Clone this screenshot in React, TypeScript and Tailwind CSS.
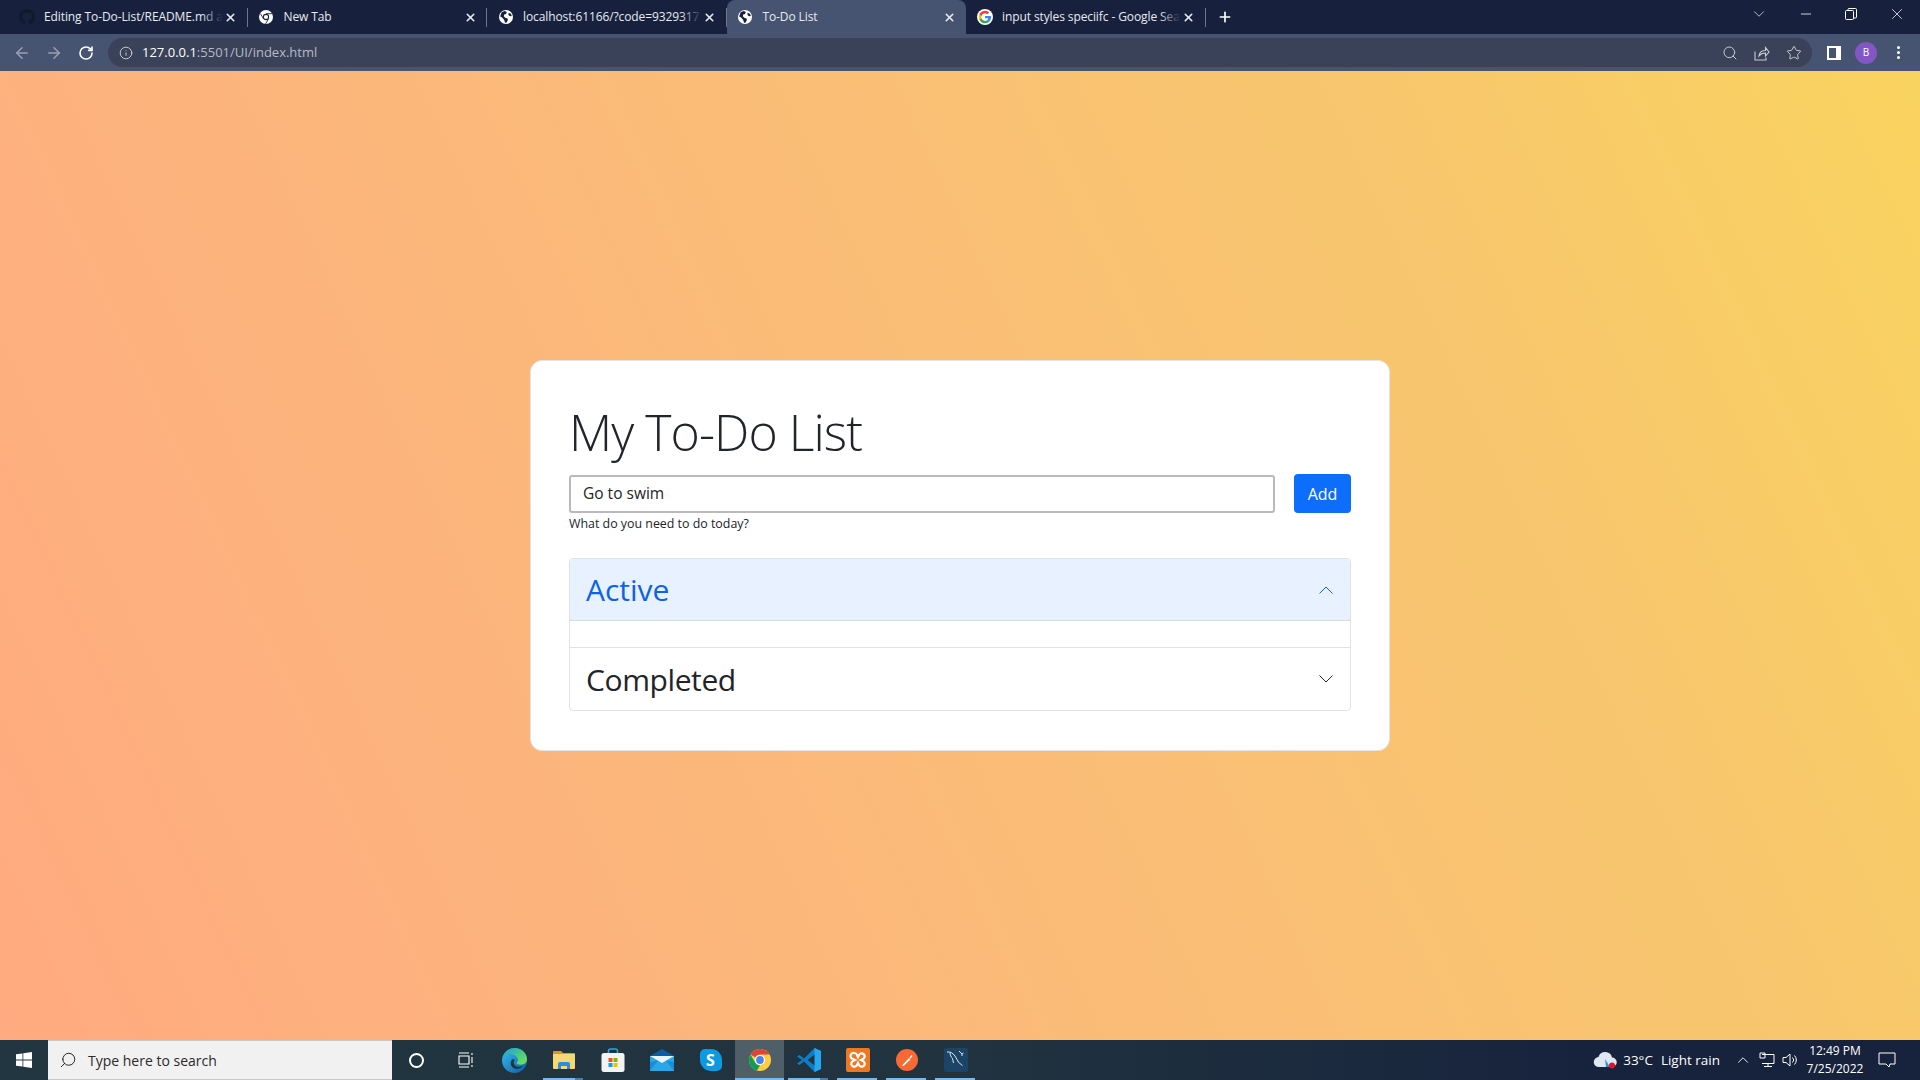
import React from "react";
import { ArrowLeft, ArrowRight, RotateCw, Info, Search, Star, X, ChevronDown, ChevronUp, Minus, Plus } from "lucide-react";

const Globe = () => (
  <svg width="14" height="14" viewBox="0 0 16 16" className="shrink-0">
    <circle cx="8" cy="8" r="8" fill="#fff" />
    <path d="M3 2.500 6.500 1 9 2.200 8 4.500 6 5l-.500 2L7.500 9l2 .300.700 2-1.700 3.200H7L5.800 11 3.500 8.500 1.300 7.300ZM11 3.200l2.700 1 .900 2.600-2 .400-1.800-1.600Z" fill="#18223e" />
  </svg>
);
const ChromeMono = () => (
  <svg width="14" height="14" viewBox="0 0 16 16" className="shrink-0">
    <circle cx="8" cy="8" r="8" fill="#fff" />
    <circle cx="8" cy="8" r="3.600" fill="#18223e" />
    <circle cx="8" cy="8" r="2.400" fill="#fff" />
    <path d="M8 4.200h7M5 10 1.600 4M11 10l-3.600 6" stroke="#18223e" strokeWidth="1" />
  </svg>
);
const GoogleG = () => (
  <svg width="16" height="16" viewBox="0 0 48 48" className="shrink-0">
    <circle cx="24" cy="24" r="24" fill="#fff" />
    <path fill="#4285F4" d="M42 24.500c0-1.300-.100-2.500-.300-3.600H24v7h10.100c-.400 2.300-1.800 4.300-3.700 5.600v4.600h6C40 34.800 42 30.100 42 24.500z" />
    <path fill="#34A853" d="M24 43c5 0 9.200-1.700 12.400-4.500l-6-4.600c-1.700 1.100-3.800 1.800-6.400 1.800-4.900 0-9-3.300-10.500-7.700H7.300v4.800C10.400 38.500 16.700 43 24 43z" />
    <path fill="#FBBC05" d="M13.500 28c-.400-1.100-.600-2.400-.600-3.600s.200-2.500.600-3.600V16H7.300C6.100 18.500 5.400 21.200 5.400 24.400s.700 5.900 1.900 8.400z" />
    <path fill="#EA4335" d="M24 13c2.800 0 5.200 1 7.200 2.800l5.300-5.300C33.200 7.400 29 5.600 24 5.600 16.700 5.600 10.400 10 7.300 16l6.200 4.800C15 16.300 19.100 13 24 13z" />
  </svg>
);
const Github = () => (
  <svg width="16" height="16" viewBox="0 0 16 16" className="shrink-0" fill="#111a2c">
    <path d="M8 0C3.580 0 0 3.580 0 8c0 3.540 2.290 6.530 5.470 7.590.4.070.55-.17.55-.38 0-.19-.01-.82-.01-1.490-2.010.37-2.530-.49-2.690-.94-.09-.23-.48-.94-.82-1.130-.28-.15-.68-.52-.01-.53.63-.01 1.080.58 1.230.82.720 1.210 1.870.870 2.330.660.070-.520.280-.870.510-1.070-1.780-.200-3.640-.890-3.640-3.950 0-.870.310-1.590.820-2.150-.080-.200-.360-1.020.080-2.120 0 0 .670-.210 2.200.820.640-.180 1.320-.270 2-.270s1.360.090 2 .270c1.530-1.040 2.200-.820 2.200-.820.440 1.100.160 1.920.080 2.120.510.560.820 1.270.820 2.150 0 3.070-1.870 3.750-3.650 3.950.290.250.540.730.540 1.480 0 1.070-.010 1.930-.010 2.200 0 .210.150.460.550.380A8.010 8.010 0 0 0 16 8c0-4.420-3.580-8-8-8z" />
  </svg>
);

function Tab({ icon, title, active, last }: { icon: React.ReactNode; title: string; active?: boolean; last?: boolean }) {
  return (
    <div className={`relative flex h-[34px] w-[239.5px] shrink-0 items-center pl-[11px] pr-[9px] ${active ? "rounded-t-lg bg-[#465371]" : ""}`}>
      <div className="flex w-[16px] items-center justify-center">{icon}</div>
      <div className="relative ml-[9px] w-[179px] overflow-hidden whitespace-nowrap text-[12px] tracking-[-0.1px] text-[#e8eaee]">
        {title}
        {!active && title.length > 20 && (
          <div className="absolute right-0 top-0 h-full w-[22px] bg-gradient-to-r from-transparent to-[#17213d]" />
        )}
      </div>
      <div className="ml-auto flex w-[16px] items-center justify-center">
        <X size={13} strokeWidth={3} color="#e8eaee" />
      </div>
      {!active && !last && <div className="absolute right-0 top-[8px] h-[19px] w-px bg-[#6f7787]" />}
      {last && <div className="absolute right-0 top-[8px] h-[19px] w-px bg-[#6f7787]" />}
    </div>
  );
}

const Taskslot = ({ children, underline, active, split }: { children: React.ReactNode; underline?: boolean; active?: boolean; split?: boolean }) => (
  <div className={`relative flex h-[40px] w-[49px] shrink-0 items-center justify-center ${active ? "bg-[#4f5f68]" : ""}`}>
    {children}
    {underline && (
      <div className={`absolute bottom-0 h-[2px] bg-[#76b9ed] ${active ? "left-0 right-0" : "left-[4px] right-[5px]"}`}>
        {split && <div className="absolute right-0 top-0 h-full w-[8px] bg-[#4a7ea6]" />}
      </div>
    )}
  </div>
);

const Edge = () => (
  <svg width="25" height="25" viewBox="0 0 24 24">
    <defs>
      <linearGradient id="e1" x1="0" y1="0" x2="1" y2="1"><stop offset="0" stopColor="#35c1f1" /><stop offset="1" stopColor="#0c59a4" /></linearGradient>
      <linearGradient id="e2" x1="0" y1="0" x2="1" y2="1"><stop offset="0" stopColor="#1b9de2" /><stop offset=".6" stopColor="#4fce7c" /><stop offset="1" stopColor="#7ce05a" /></linearGradient>
    </defs>
    <circle cx="12" cy="12" r="12" fill="url(#e1)" />
    <path d="M1 9C3 3 8 0 12 0c6 0 12 4 12 11 0 3-3 5-6 5s-4-1-4-2c1-1 2-2 1-4C13 6 8 5 5 6.500 3 7.500 2 8 1 9Z" fill="url(#e2)" />
    <path d="M9 12c-2 4 1 8 5 8 3 0 5-1 6-3-3 2-7 1-8-1-1-1-1-3 0-4 .500-1-2-2-3 0Z" fill="#1f3440" />
  </svg>
);
const Folder = () => (
  <svg width="22" height="20" viewBox="0 0 22 20">
    <path d="M0 2a1 1 0 0 1 1-1h7l2 2h11a1 1 0 0 1 1 1v2H0Z" fill="#d89b13" />
    <path d="M0 4h21a1 1 0 0 1 1 1v13a1 1 0 0 1-1 1H1a1 1 0 0 1-1-1Z" fill="#f7d774" />
    <path d="M5 19v-5a2 2 0 0 1 2-2h8a2 2 0 0 1 2 2v5h-3v-3H8v3Z" fill="#2d8ed4" />
  </svg>
);
const Store = () => (
  <svg width="24" height="24" viewBox="0 0 24 24">
    <path d="M7.500 7V3a2 2 0 0 1 2-2h5a2 2 0 0 1 2 2v4" fill="none" stroke="#27a5e8" strokeWidth="1.600" />
    <rect x="0.500" y="5" width="23" height="19" rx="2.500" fill="#f3f3f3" />
    <rect x="7.500" y="10" width="4" height="4" fill="#f25022" />
    <rect x="12.500" y="10" width="4" height="4" fill="#7fba00" />
    <rect x="7.500" y="15" width="4" height="4" fill="#00a4ef" />
    <rect x="12.500" y="15" width="4" height="4" fill="#ffb900" />
  </svg>
);
const Mail = () => (
  <svg width="24" height="22" viewBox="0 0 24 22">
    <path d="M0 7 12 0l12 7v3H0Z" fill="#0a5ea8" />
    <rect x="0" y="7" width="24" height="15" fill="#28a8ea" />
    <path d="M0 7h24L12 14Z" fill="#eaf4fb" />
    <path d="M0 22V13l8-1.500Zm24 0V13l-8-1.500Z" fill="#0f7dc9" opacity=".6" />
  </svg>
);
const Skype = () => (
  <div className="flex h-[22px] w-[22px] items-center justify-center rounded-l-[11px] rounded-r-[11px] rounded-tl-[5px] rounded-br-[5px] bg-[#0d9ae0] text-[16px] font-bold leading-none text-white">S</div>
);
const ChromeC = () => (
  <svg width="22" height="22" viewBox="0 0 48 48">
    <circle cx="24" cy="24" r="24" fill="#ffcd40" />
    <path d="M24 0a24 24 0 0 1 20.800 12H24a12 12 0 0 0-10.400 6L3.200 12A24 24 0 0 1 24 0Z" fill="#db4437" />
    <path d="M3.200 12 13.600 30A12 12 0 0 0 24 36l-6.600 11.100A24 24 0 0 1 3.200 12Z" fill="#0f9d58" />
    <circle cx="24" cy="24" r="11" fill="#fff" />
    <circle cx="24" cy="24" r="8.500" fill="#4285f4" />
  </svg>
);
const VSCode = () => (
  <svg width="24" height="24" viewBox="0 0 24 24">
    <path d="M17.500 0 24 3v18l-6.500 3L7 13.500 2.500 17 0 15.500 5 12 0 8.500 2.500 7 7 10.500Z" fill="#0f7cc5" />
    <path d="M17.500 0 24 3v18l-6.500 3Zm0 6.500L10.500 12l7 5.500Z" fill="#25a8f1" />
    <path d="M17.500 6.500 10.500 12l7 5.500Z" fill="#1f3440" />
  </svg>
);
const Xampp = () => (
  <svg width="24" height="24" viewBox="0 0 24 24">
    <rect width="24" height="24" rx="2" fill="#ee7723" />
    <path d="M8 5a3 3 0 0 0-1 6l2 1-2 1a3 3 0 1 0 4 4l1-2 1 2a3 3 0 1 0 4-4l-2-1 2-1a3 3 0 1 0-4-4l-1 2-1-2a3 3 0 0 0-3-2Z" fill="none" stroke="#fff" strokeWidth="2.200" />
  </svg>
);
const Postman = () => (
  <svg width="22" height="22" viewBox="0 0 22 22">
    <circle cx="11" cy="11" r="11" fill="#f76935" />
    <path d="M6 16.500 13 9l1.500 1.500-7 6.500ZM13.500 8.500l2-2.500 1 1-2 2.500Z" fill="#fff" />
  </svg>
);
const MySQL = () => (
  <svg width="24" height="24" viewBox="0 0 24 24">
    <rect width="24" height="24" rx="2" fill="#1c4466" />
    <path d="M3 4c3-.500 6 1 8 4 1.500 2 2 4 3.500 6 1 1.500 2.500 2.500 4 3.500M6 4.500C6 7 7 9 8.500 10.500c.500 1.500.500 3 1 4.500M15 3l3 3 1.500-1M18 6v2" fill="none" stroke="#dfe8ee" strokeWidth="1" />
  </svg>
);
const AccChevron = ({ color, up }: { color: string; up?: boolean }) => (
  <svg width="20" height="20" viewBox="0 0 20 20" fill="none" stroke={color} strokeWidth="1" className={up ? "rotate-180" : ""}>
    <path d="M3.500 6.500 10 13l6.500-6.500" />
  </svg>
);

export default function App() {
  return (
    <div className="flex h-[1080px] w-[1920px] flex-col overflow-hidden [font-family:'Open_Sans','Noto_Sans',sans-serif]">
      {/* Tab strip */}
      <div className="flex h-[34px] shrink-0 items-center bg-[#17213d] pl-[8px]">
        <Tab icon={<Github />} title="Editing To-Do-List/README.md a" />
        <Tab icon={<ChromeMono />} title="New Tab" />
        <Tab icon={<Globe />} title="localhost:61166/?code=9329317" />
        <Tab icon={<Globe />} title="To-Do List" active />
        <Tab icon={<GoogleG />} title="input styles speciifc - Google Sea" last />
        <div className="ml-[11px] flex w-[16px] items-center justify-center">
          <Plus size={18} strokeWidth={2.500} color="#fff" />
        </div>
        <div className="ml-auto flex items-center">
          <ChevronDown size={18} strokeWidth={1} color="#e8eaee" className="mr-[30px] -mt-[6px]" />
          <Minus size={16} strokeWidth={1.200} color="#fff" className="mr-[31px] -mt-[6px]" />
          <svg width="12" height="12" viewBox="0 0 12 12" className="mr-[31px] -mt-[6px]" fill="none" stroke="#fff">
            <rect x="0.500" y="2.500" width="8" height="9" rx="1" />
            <path d="M3 2.500V1.500a1 1 0 0 1 1-1h6.500a1 1 0 0 1 1 1V9a1 1 0 0 1-1 1h-2" />
          </svg>
          <X size={18} strokeWidth={1} color="#fff" className="mr-[14px] -mt-[6px]" />
        </div>
      </div>

      {/* Toolbar */}
      <div className="flex h-[37px] shrink-0 items-center bg-[#465371]">
        <div className="flex w-[108px] shrink-0 items-center pl-[13px]">
          <ArrowLeft size={18} strokeWidth={2} color="#9aa1b1" />
          <ArrowRight size={18} strokeWidth={2} color="#9aa1b1" className="ml-[14px]" />
          <RotateCw size={16} strokeWidth={2.400} color="#fff" className="ml-[15px]" />
        </div>
        <div className="flex h-[29px] w-[1704px] items-center rounded-full bg-[#3a4259] pl-[11px] pr-[10px]">
          <Info size={14} strokeWidth={1.500} color="#d5d8de" />
          <div className="ml-[9px] whitespace-nowrap text-[13px] text-[#b5bac6]">
            <span className="text-white">127.0.0.1</span>:5501/UI/index.html
          </div>
          <div className="ml-auto flex items-center gap-[16px]">
            <Search size={16} strokeWidth={1.500} color="#c9ccd3" />
            <svg width="16" height="16" viewBox="0 0 16 16" fill="none" stroke="#c9ccd3" strokeWidth="1.100">
              <path d="M1 6.500V15h11v-2.500M5 11c.500-4 3-5.500 6.500-5.500V2.500L15 7l-3.500 4V8C8.500 8 6.500 9 5 11Z" />
            </svg>
            <Star size={16} strokeWidth={1.500} color="#c9ccd3" />
          </div>
        </div>
        <div className="ml-[15px] h-[14px] w-[14px] shrink-0 border-[2px] border-white border-r-[5px] bg-[#465371]" />
        <div className="ml-[14px] flex h-[22px] w-[22px] shrink-0 items-center justify-center rounded-full bg-[#8257c4] text-[10px] text-white">B</div>
        <div className="ml-[20px] flex flex-col gap-[2px]">
          <div className="h-[3px] w-[3px] rounded-full bg-white" />
          <div className="h-[3px] w-[3px] rounded-full bg-white" />
          <div className="h-[3px] w-[3px] rounded-full bg-white" />
        </div>
      </div>

      {/* Page */}
      <div className="flex flex-1 items-center justify-center bg-[linear-gradient(65deg,#ffaa80_0%,#fbb97a_40%,#f8c66e_75%,#f9d35f_100%)]">
        <div className="w-[860px] rounded-xl border border-[#e4e4e4] bg-white px-[38px] pt-[41px] pb-[39px]">
          <h1 className="text-[50px] font-light leading-[60px] tracking-[-0.95px] text-[#212529]">My To-Do List</h1>
          <div className="mt-[12px] flex items-center justify-between">
            <div className="flex h-[38px] w-[706px] items-center rounded-[3px] border-2 border-[#b8babd] pl-[12px] text-[15.500px] text-[#212529]">Go to swim</div>
            <button className="h-[39px] w-[57px] rounded-[4px] bg-[#0d6efd] text-[16px] text-white">Add</button>
          </div>
          <div className="pt-[1px] text-[12.400px] leading-[20px] text-[#212529]">What do you need to do today?</div>
          <div className="mt-[24px] rounded-[4px] border border-[#dfe1e4] text-[30px]">
            <div className="flex h-[62px] items-center justify-between border-b border-[#d6d9de] bg-[#e7f1ff] pl-[16px] pr-[14px] text-[#0c63e4]">
              <span>Active</span>
              <AccChevron color="#0c63e4" up />
            </div>
            <div className="h-[27px] border-b border-[#dfe1e4]" />
            <div className="flex h-[62px] items-center justify-between pl-[16px] pr-[14px] text-[#212529]">
              <span className="tracking-[-0.4px]">Completed</span>
              <AccChevron color="#212529" />
            </div>
          </div>
        </div>
      </div>

      {/* Taskbar */}
      <div className="flex h-[40px] shrink-0 items-center bg-[linear-gradient(90deg,#213640_0%,#20333f_50%,#17223d_85%)] text-white">
        <div className="flex h-[40px] w-[48px] shrink-0 items-center justify-center">
          <svg width="16" height="16" viewBox="0 0 16 16" fill="#fff">
            <path d="M0 2.300 6.500 1.400v6.200H0ZM7.300 1.300 16 0v7.600H7.300ZM0 8.400h6.500v6.200L0 13.700ZM7.300 8.400H16V16l-8.700-1.300Z" />
          </svg>
        </div>
        <div className="flex h-[40px] w-[344px] shrink-0 items-center border-t border-b border-[#c9c9c9] bg-[#f1f1f1] pl-[11px] text-[14px] text-[#2b2b2b]">
          <Search size={18} strokeWidth={1.300} color="#222" className="-scale-x-100" />
          <span className="ml-[11px]">Type here to search</span>
        </div>
        <Taskslot>
          <div className="h-[15px] w-[15px] rounded-full border-2 border-white" />
        </Taskslot>
        <Taskslot>
          <svg width="16" height="16" viewBox="0 0 16 16" fill="none" stroke="#fff" strokeWidth="1.100">
            <path d="M1 1h10M1 15h10M1 4h10v8H1zM14 1v2M14 5v6M14 13v2" />
          </svg>
        </Taskslot>
        <Taskslot><Edge /></Taskslot>
        <Taskslot underline split><Folder /></Taskslot>
        <Taskslot><Store /></Taskslot>
        <Taskslot><Mail /></Taskslot>
        <Taskslot><Skype /></Taskslot>
        <Taskslot underline active><ChromeC /></Taskslot>
        <Taskslot underline split><VSCode /></Taskslot>
        <Taskslot underline><Xampp /></Taskslot>
        <Taskslot underline><Postman /></Taskslot>
        <Taskslot underline><MySQL /></Taskslot>
        <div className="ml-auto flex items-center pr-[5px]">
          <div className="relative mr-[6px]">
            <svg width="24" height="18" viewBox="0 0 24 18">
              <path d="M6 16a5 5 0 0 1-.500-10A7 7 0 0 1 19 6.500a4.500 4.500 0 0 1 0 9.500Z" fill="#dfe8f2" />
              <path d="M12 8l5 8h-4Z" fill="#2a8fdc" />
              <circle cx="19" cy="14.500" r="3" fill="#e81123" />
            </svg>
          </div>
          <span className="text-[13.500px]">33°C</span>
          <span className="ml-[8px] text-[13.500px]">Light rain</span>
          <ChevronUp size={18} strokeWidth={1.200} color="#fff" className="ml-[14px]" />
          <svg width="16" height="16" viewBox="0 0 16 16" fill="none" stroke="#fff" className="ml-[7px]">
            <path d="M3 2.500h12v9H3M1 1v5h5V1ZM9 11.500v3M5 14.500h8" />
          </svg>
          <svg width="16" height="16" viewBox="0 0 16 16" fill="none" stroke="#fff" className="ml-[7px]">
            <path d="M1 5.500h3L8 2v12l-4-3.500H1ZM10.500 5.500a3.500 3.500 0 0 1 0 5M12.500 3.500a6.500 6.500 0 0 1 0 9" />
          </svg>
          <div className="ml-[2px] flex w-[70px] flex-col items-center text-[12px] leading-[18px]">
            <span>12:49 PM</span>
            <span>7/25/2022</span>
          </div>
          <svg width="18" height="16" viewBox="0 0 18 16" fill="none" stroke="#fff" className="ml-[8px] mr-[19px]">
            <path d="M1 1h16v11h-5l-1 3-3-3H1Z" />
          </svg>
        </div>
      </div>
    </div>
  );
}
